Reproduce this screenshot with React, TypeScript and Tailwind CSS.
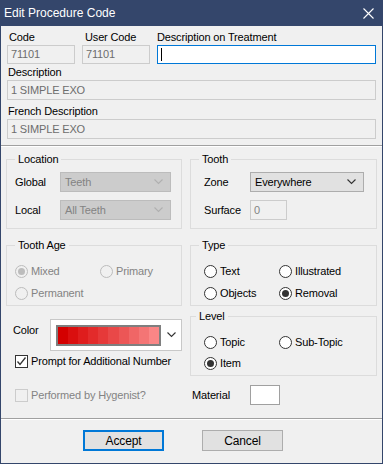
import clsx from 'clsx'

interface RadioProps {
  label: string
  checked?: boolean
  disabled?: boolean
}

function Radio({ label, checked = false, disabled = false }: RadioProps): JSX.Element {
  return (
    <div className="flex h-[13px] items-center gap-[3px]">
      <span
        className={clsx(
          'flex h-[13px] w-[13px] flex-shrink-0 items-center justify-center rounded-full border',
          disabled ? 'border-[#bcbcbc] bg-[#f0f0f0]' : 'border-[#333333] bg-white',
        )}
      >
        {checked && (
          <span
            className={clsx('h-[7px] w-[7px] rounded-full', disabled ? 'bg-[#bcbcbc]' : 'bg-[#333333]')}
          />
        )}
      </span>
      <span className={clsx('leading-[13px]', disabled && 'text-[#838383]')}>{label}</span>
    </div>
  )
}

function Chevron({ color }: { color: string }): JSX.Element {
  return (
    <svg width="9" height="6" viewBox="0 0 9 6" aria-hidden="true">
      <polyline points="0.5,0.5 4.5,4.5 8.5,0.5" fill="none" stroke={color} strokeWidth="1.1" />
    </svg>
  )
}

function Select({ value, disabled = false, width }: { value: string; disabled?: boolean; width: string }): JSX.Element {
  return (
    <div
      className={clsx(
        'flex h-[20px] items-center justify-between border pl-[4px] pr-[7px]',
        width,
        disabled ? 'border-[#bcbcbc] bg-[#cccccc] text-[#838383]' : 'border-[#adadad] bg-[#e1e1e1] text-black',
      )}
    >
      <span className="leading-[13px]">{value}</span>
      <Chevron color={disabled ? '#b0b0b0' : '#333333'} />
    </div>
  )
}

function GroupBox({
  title,
  className,
  legendLeft = 'left-[8px]',
  children,
}: {
  title: string
  className?: string
  legendLeft?: string
  children: React.ReactNode
}): JSX.Element {
  return (
    <div className={clsx('relative border border-[#dcdcdc]', className)}>
      <span className={clsx('absolute -top-[7px] bg-[#f0f0f0] px-[3px] leading-[12px]', legendLeft)}>{title}</span>
      {children}
    </div>
  )
}

function ReadOnlyInput({ value, className }: { value: string; className?: string }): JSX.Element {
  return (
    <div
      className={clsx(
        'flex items-center border border-[#cccccc] bg-[#f0f0f0] pl-[3px] leading-[13px] text-[#6d6d6d]',
        className,
      )}
    >
      {value}
    </div>
  )
}

function Checkbox({ label, checked = false, disabled = false }: RadioProps): JSX.Element {
  return (
    <div className="flex items-center gap-[3px]">
      <span
        className={clsx(
          'flex h-[13px] w-[13px] flex-shrink-0 items-center justify-center border',
          disabled ? 'border-[#cccccc] bg-[#f0f0f0]' : 'border-[#333333] bg-white',
        )}
      >
        {checked && (
          <svg width="11" height="11" viewBox="0 0 11 11" aria-hidden="true">
            <polyline points="1.5,5.5 4,8.5 9.5,1.5" fill="none" stroke="#333333" strokeWidth="1.3" />
          </svg>
        )}
      </span>
      <span className={clsx('leading-[13px]', disabled && 'text-[#838383]')}>{label}</span>
    </div>
  )
}

const swatch = ['#d40000', '#da0f0f', '#df1d1d', '#e32b2b', '#e63939', '#e94848', '#ec5656', '#f06666', '#f47575', '#fa8686']

export default function App(): JSX.Element {
  return (
    <div className="flex h-[464px] w-[383px] flex-col border-x border-b border-[#34466b] bg-[#f0f0f0] font-['Liberation_Sans',Arial,sans-serif] text-[11px] tracking-[-0.15px] text-black">
      {/* title bar */}
      <div className="flex h-[26px] flex-shrink-0 items-center justify-between bg-[#34466b] pl-[3px] pr-[8px] text-[12px] tracking-normal text-white">
        <span>Edit Procedure Code</span>
        <svg width="11" height="11" viewBox="0 0 11 11" aria-hidden="true">
          <path d="M0.5 0.5 L10.5 10.5 M10.5 0.5 L0.5 10.5" stroke="#ffffff" strokeWidth="1.1" />
        </svg>
      </div>

      {/* code + descriptions */}
      <div className="flex flex-col px-[6px] pt-[5px]">
        <div className="grid grid-cols-[68px_68px_219px] gap-x-[7px]">
          <span className="mb-[2px] pl-[2px] leading-[12px]">Code</span>
          <span className="mb-[2px] pl-[3px] leading-[12px]">User Code</span>
          <span className="mb-[2px] leading-[12px]">Description on Treatment</span>
          <ReadOnlyInput value="71101" className="h-[19px]" />
          <ReadOnlyInput value="71101" className="h-[19px]" />
          <div className="flex h-[19px] items-center border border-[#0078d7] bg-white pl-[3px]">
            <span className="h-[13px] w-px bg-black" />
          </div>
        </div>
        <span className="mt-[2px] mb-[2px] pl-[1px] leading-[12px]">Description</span>
        <ReadOnlyInput value="1 SIMPLE EXO" className="h-[20px]" />
        <span className="mt-[5px] mb-[2px] pl-[1px] leading-[12px]">French Description</span>
        <ReadOnlyInput value="1 SIMPLE EXO" className="h-[20px]" />
      </div>

      <div className="mt-[6px] h-[2px] border-t border-b border-t-[#a0a0a0] border-b-white" />

      {/* groups */}
      <div className="flex flex-col px-[5px]">
        <div className="mt-[12px] grid grid-cols-[176px_187px] gap-x-[8px]">
          <GroupBox title="Location" className="h-[70px] pt-[12px] pl-[8px]">
            <div className="flex flex-col gap-[8px]">
              <div className="flex items-center">
                <span className="w-[45px]">Global</span>
                <Select value="Teeth" disabled width="w-[111px]" />
              </div>
              <div className="flex items-center">
                <span className="w-[45px]">Local</span>
                <Select value="All Teeth" disabled width="w-[111px]" />
              </div>
            </div>
          </GroupBox>
          <GroupBox title="Tooth" className="h-[70px] pt-[12px] pl-[13px]">
            <div className="flex flex-col gap-[8px]">
              <div className="flex items-center">
                <span className="w-[46px]">Zone</span>
                <Select value="Everywhere" width="w-[114px]" />
              </div>
              <div className="flex items-center">
                <span className="w-[46px]">Surface</span>
                <div className="flex h-[20px] w-[37px] items-center border border-[#cccccc] bg-[#f0f0f0] pl-[3px] text-[#838383]">
                  0
                </div>
              </div>
            </div>
          </GroupBox>
        </div>

        <div className="mt-[16px] grid grid-cols-[176px_187px] gap-x-[8px]">
          <GroupBox title="Tooth Age" className="h-[61px] pt-[19px] pl-[8px]">
            <div className="grid grid-cols-[85px_1fr] gap-y-[9px]">
              <Radio label="Mixed" checked disabled />
              <Radio label="Primary" disabled />
              <Radio label="Permanent" disabled />
            </div>
          </GroupBox>
          <GroupBox title="Type" className="h-[61px] pt-[19px] pl-[13px]">
            <div className="grid grid-cols-[75px_1fr] gap-y-[9px]">
              <Radio label="Text" />
              <Radio label="Illustrated" />
              <Radio label="Objects" />
              <Radio label="Removal" checked />
            </div>
          </GroupBox>
        </div>

        <div className="mt-[10px] grid grid-cols-[176px_187px] gap-x-[8px]">
          <div className="flex flex-col pt-[3px]">
            <div className="flex items-start">
              <span className="mt-[5px] w-[44px] pl-[7px] leading-[12px]">Color</span>
              <div className="flex h-[32px] w-[132px] items-center justify-between border border-[#c8c8c8] bg-white pl-[5px] pr-[5px]">
                <div className="flex h-[21px] w-[105px] border-2 border-[#7f7f7f]">
                  {swatch.map((c) => (
                    <span key={c} className="flex-1" style={{ backgroundColor: c }} />
                  ))}
                </div>
                <Chevron color="#333333" />
              </div>
            </div>
            <div className="mt-[4px] pl-[9px]">
              <Checkbox label="Prompt for Additional Number" checked />
            </div>
          </div>
          <GroupBox title="Level" legendLeft="left-[5px]" className="h-[60px] pt-[19px] pl-[13px]">
            <div className="grid grid-cols-[75px_1fr] gap-y-[8px]">
              <Radio label="Topic" />
              <Radio label="Sub-Topic" />
              <Radio label="Item" checked />
            </div>
          </GroupBox>
        </div>

        <div className="mt-[9px] grid h-[20px] grid-cols-[176px_187px] gap-x-[8px]">
          <div className="flex items-center pl-[9px]">
            <Checkbox label="Performed by Hygenist?" disabled />
          </div>
          <div className="flex items-center pl-[2px]">
            <span className="w-[58px]">Material</span>
            <div className="h-[20px] w-[30px] border border-[#a0a0a0] bg-white" />
          </div>
        </div>
      </div>

      <div className="mt-[13px] h-[2px] border-t border-b border-t-[#a0a0a0] border-b-white" />

      {/* buttons */}
      <div className="mt-[10px] flex gap-[38px] pl-[82px]">
        <button
          type="button"
          className="h-[21px] w-[81px] border-2 border-[#0078d7] bg-[#e1e1e1] text-[12px] leading-none"
        >
          Accept
        </button>
        <button
          type="button"
          className="h-[21px] w-[81px] border border-[#adadad] bg-[#e1e1e1] text-[12px] leading-none"
        >
          Cancel
        </button>
      </div>
    </div>
  )
}
